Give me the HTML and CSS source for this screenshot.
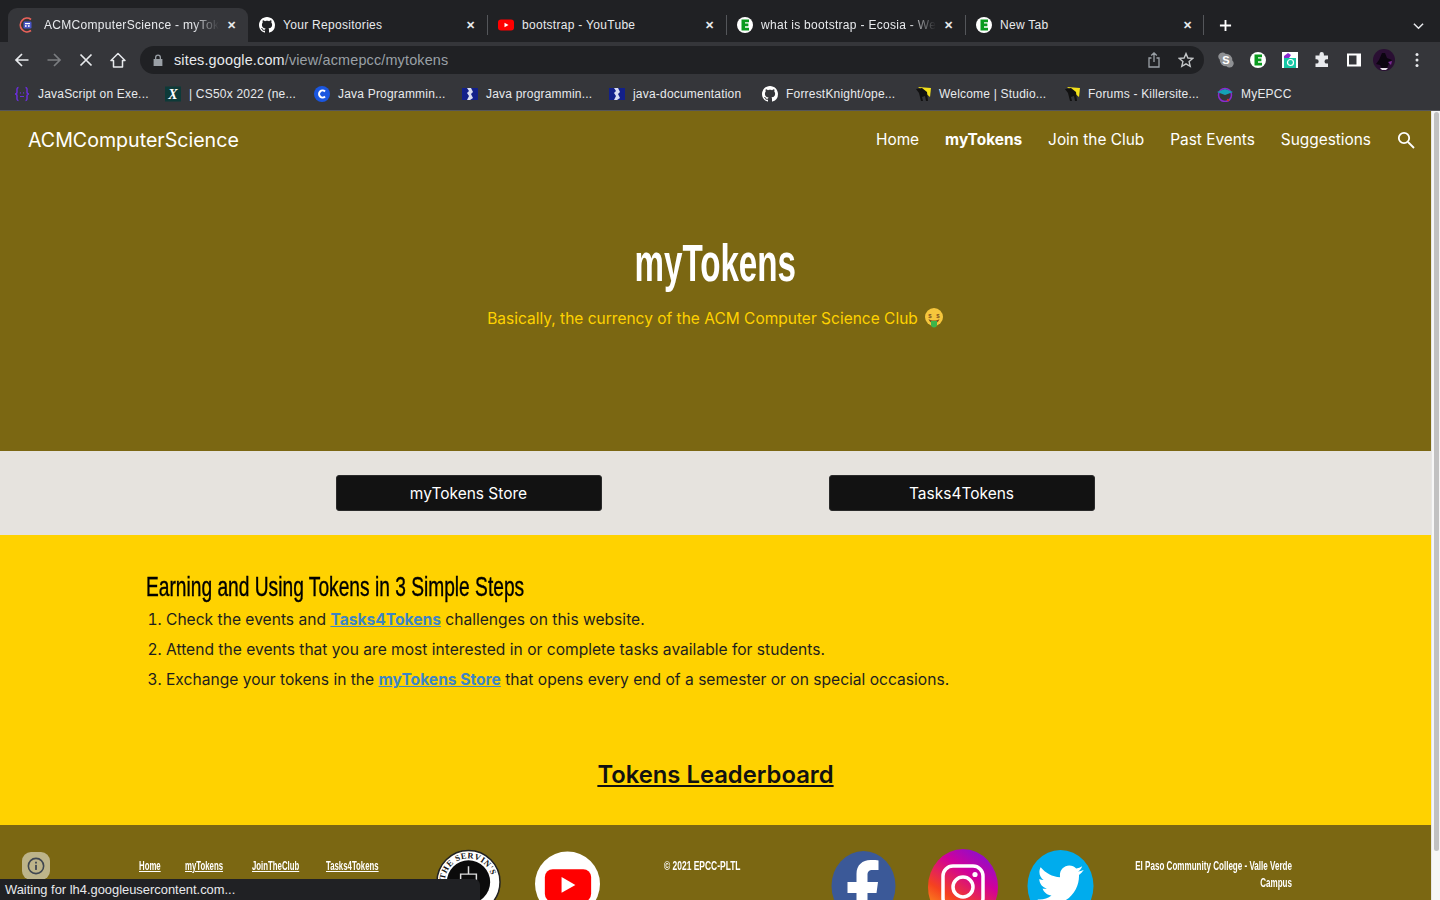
FILE: index.html
```html
<!DOCTYPE html>
<html lang="en">
<head>
<meta charset="utf-8">
<title>ACMComputerScience - myTokens</title>
<link rel="stylesheet" href="styles.css">
</head>
<body>
<div class="browser">
  <div class="tabstrip">
    <div class="tab tab-active">
      <svg class="fav" viewBox="0 0 16 16"><path d="M12 2.4A6.8 6.8 0 1 0 12 13.6" fill="none" stroke="#e8625a" stroke-width="1.8"/><rect x="4.5" y="4.5" width="8" height="7" rx="1.2" fill="#4a56c8"/><rect x="6" y="6" width="5" height="1.2" fill="#fff"/><rect x="6" y="8.2" width="1.6" height="1.6" fill="#fff"/><rect x="9" y="8.2" width="1.6" height="1.6" fill="#fff"/></svg>
      <span class="tab-title fade">ACMComputerScience - myTok</span>
      <span class="tab-x">✕</span>
    </div>
    <div class="tab">
      <svg class="fav" viewBox="0 0 16 16"><path fill="#fff" d="M8 0C3.58 0 0 3.58 0 8c0 3.54 2.29 6.53 5.47 7.59.4.07.55-.17.55-.38 0-.19-.01-.82-.01-1.49-2.01.37-2.53-.49-2.69-.94-.09-.23-.48-.94-.82-1.13-.28-.15-.68-.52-.01-.53.63-.01 1.08.58 1.23.82.72 1.21 1.87.87 2.33.66.07-.52.28-.87.51-1.07-1.78-.2-3.64-.89-3.64-3.95 0-.87.31-1.59.82-2.15-.08-.2-.36-1.02.08-2.12 0 0 .67-.21 2.2.82.64-.18 1.32-.27 2-.27s1.36.09 2 .27c1.53-1.04 2.2-.82 2.2-.82.44 1.1.16 1.92.08 2.12.51.56.82 1.27.82 2.15 0 3.07-1.87 3.75-3.65 3.95.29.25.54.73.54 1.48 0 1.07-.01 1.93-.01 2.2 0 .21.15.46.55.38A8.01 8.01 0 0 0 16 8c0-4.42-3.58-8-8-8z"/></svg>
      <span class="tab-title">Your Repositories</span>
      <span class="tab-x">✕</span>
    </div>
    <div class="tab tab-sep">
      <svg class="fav" viewBox="0 0 16 16"><rect y="2.5" width="16" height="11" rx="3" fill="#f00"/><path d="M6.5 5.7v4.6L10.5 8z" fill="#fff"/></svg>
      <span class="tab-title">bootstrap - YouTube</span>
      <span class="tab-x">✕</span>
    </div>
    <div class="tab tab-sep">
      <svg class="fav" viewBox="0 0 16 16"><circle cx="8" cy="8" r="8" fill="#fff"/><path d="M4.5 2.5h7.5v2.8H8v1.3h3.4v2.6H8v1.5h4v2.8H4.5z" fill="#0a9a1f"/></svg>
      <span class="tab-title fade">what is bootstrap - Ecosia - We</span>
      <span class="tab-x">✕</span>
    </div>
    <div class="tab tab-sep tab-last">
      <svg class="fav" viewBox="0 0 16 16"><circle cx="8" cy="8" r="8" fill="#fff"/><path d="M4.5 2.5h7.5v2.8H8v1.3h3.4v2.6H8v1.5h4v2.8H4.5z" fill="#0a9a1f"/></svg>
      <span class="tab-title">New Tab</span>
      <span class="tab-x">✕</span>
    </div>
    <svg class="newtab" viewBox="0 0 14 14"><path d="M7 1v12M1 7h12" stroke="#fff" stroke-width="2"/></svg>
    <svg class="tabmenu" viewBox="0 0 12 8"><path d="M1 1.5l5 5 5-5" fill="none" stroke="#e8eaed" stroke-width="1.6"/></svg>
  </div>

  <div class="toolbar">
    <svg class="navicon" viewBox="0 0 16 16"><path d="M14.5 8H2M8 2L2 8l6 6" fill="none" stroke="#e8eaed" stroke-width="1.7"/></svg>
    <svg class="navicon" viewBox="0 0 16 16"><path d="M1.5 8H14M8 2l6 6-6 6" fill="none" stroke="#7b7d80" stroke-width="1.7"/></svg>
    <svg class="navicon" viewBox="0 0 16 16"><path d="M2.5 2.5l11 11M13.5 2.5l-11 11" fill="none" stroke="#e8eaed" stroke-width="1.7"/></svg>
    <svg class="navicon" viewBox="0 0 16 16"><path d="M8 1.5L1 8.500h2.500V15h9V8.500H15z" fill="none" stroke="#e8eaed" stroke-width="1.5" stroke-linejoin="round"/></svg>
    <div class="omnibox">
      <svg class="lock" viewBox="0 0 10 12"><path d="M2 5V3.400a3 3 0 0 1 6 0V5h1.400v7H.6V5zm1.300 0h3.400V3.400a1.700 1.700 0 0 0-3.400 0z" fill="#9aa0a6" fill-rule="evenodd"/></svg>
      <span class="url"><span class="url-host">sites.google.com</span>/view/acmepcc/mytokens</span>
      <svg class="omni-ic omni-share" viewBox="0 0 14 16"><path d="M7 1v9M4.200 3.600L7 1l2.800 2.600M4.500 6H2v9h10V6H9.500" fill="none" stroke="#9aa0a6" stroke-width="1.300"/></svg>
      <svg class="omni-ic" viewBox="0 0 16 16"><path d="M8 1.600l1.900 4.400 4.800.4-3.600 3.200 1.100 4.700L8 11.800l-4.200 2.500 1.100-4.700L1.300 6.400 6.100 6z" fill="none" stroke="#c4c7c9" stroke-width="1.400"/></svg>
    </div>
    <div class="ext-row">
      <svg class="ext" viewBox="0 0 16 16"><path d="M4.500 0.500a4 4 0 0 1 3 1.200 6.500 6.500 0 0 1 6.800 6.800A4 4 0 0 1 11.500 15.500a4 4 0 0 1-3-1.200A6.500 6.500 0 0 1 1.700 7.500 4 4 0 0 1 4.500 0.500z" fill="#8f9194"/><text x="8" y="12" class="ext-s">S</text></svg>
      <svg class="ext" viewBox="0 0 16 16"><circle cx="8" cy="8" r="8" fill="#fff"/><path d="M4.500 2.500h7.500v2.800H8v1.300h3.400v2.600H8v1.500h4v2.800H4.500z" fill="#0a9a1f"/></svg>
      <svg class="ext" viewBox="0 0 16 16"><rect width="16" height="16" fill="#fff"/><path d="M2 4l4-3 3 2-2 3H2z" fill="#8a2bd0"/><rect x="2" y="6" width="12" height="10" fill="#16c7a5"/><circle cx="8.500" cy="10.500" r="3" fill="none" stroke="#fff" stroke-width="1.200"/></svg>
      <svg class="ext" viewBox="0 0 16 16"><path d="M5.500 2.200a2.200 2.200 0 0 1 4.400 0V3.500H14v3.700h-1.300a2.200 2.200 0 0 0 0 4.400H14V15H1.500v-3.400h1a2.200 2.200 0 0 0 0-4.400h-1V3.500h4z" fill="#e8eaed"/></svg>
      <svg class="ext" viewBox="0 0 16 16"><path d="M1 1.500h14v13H1zm2 2v9h7.500v-9z" fill="#fff" fill-rule="evenodd"/></svg>
      <svg class="avatar" viewBox="0 0 22 22"><circle cx="11" cy="11" r="11" fill="#2a0f33"/><path d="M9 4h3l2 5 5 2-3 3-1 3-2 3H9l-2-4-4-1 3-4z" fill="#0c0510"/><path d="M7 19h8l-2 2H9z" fill="#e6e0e8"/><path d="M15 13l4-1-1 4z" fill="#7a2a93"/></svg>
      <svg class="dots" viewBox="0 0 4 16"><circle cx="2" cy="2.500" r="1.500" fill="#e8eaed"/><circle cx="2" cy="8" r="1.500" fill="#e8eaed"/><circle cx="2" cy="13.500" r="1.500" fill="#e8eaed"/></svg>
    </div>
  </div>

  <div class="bookmarks">
    <div class="bm bm1"><svg class="fav" viewBox="0 0 16 16"><path d="M4.500 1.500C2.500 1.500 3 4 3 6S1 8 1 8s2 0 2 2-.5 4.500 1.500 4.500M11.500 1.500c2 0 1.500 2.500 1.500 4.500s2 2 2 2-2 0-2 2 .5 4.500-1.500 4.500" fill="none" stroke="#6a2fd8" stroke-width="1.500"/><path d="M6 6.500l.8.8M9.200 6.500l.8.800M6 10.500h4" stroke="#6a2fd8" stroke-width="1.100"/></svg><span>JavaScript on Exe...</span></div>
    <div class="bm bm2"><svg class="fav" viewBox="0 0 16 16"><rect width="16" height="15" y=".5" fill="#0d3a38"/><text x="8" y="13" class="ext-x">X</text></svg><span>| CS50x 2022 (ne...</span></div>
    <div class="bm bm3"><svg class="fav" viewBox="0 0 16 16"><circle cx="8" cy="8" r="8" fill="#1a56e0"/><path d="M11 5.500a3.500 3.500 0 1 0 0 5" fill="none" stroke="#fff" stroke-width="2"/></svg><span>Java Programmin...</span></div>
    <div class="bm bm4"><svg class="fav" viewBox="0 0 16 16"><rect y="2" width="16" height="12" fill="#12208a"/><path d="M5 2h4l2 4-2 2 2 4-3 2H5l2-4-2-3 2-2z" fill="#d8dcf2"/></svg><span>Java programmin...</span></div>
    <div class="bm bm5"><svg class="fav" viewBox="0 0 16 16"><rect y="2" width="16" height="12" fill="#12208a"/><path d="M5 2h4l2 4-2 2 2 4-3 2H5l2-4-2-3 2-2z" fill="#d8dcf2"/></svg><span>java-documentation</span></div>
    <div class="bm bm6"><svg class="fav" viewBox="0 0 16 16"><path fill="#fff" d="M8 0C3.580 0 0 3.580 0 8c0 3.540 2.290 6.530 5.470 7.590.4.070.55-.17.55-.38 0-.19-.01-.82-.01-1.490-2.010.37-2.530-.49-2.690-.94-.09-.23-.48-.94-.82-1.130-.28-.15-.68-.52-.01-.53.630-.01 1.080.58 1.230.82.720 1.210 1.870.87 2.330.66.070-.52.280-.87.510-1.070-1.780-.2-3.640-.89-3.640-3.950 0-.87.310-1.590.820-2.150-.08-.2-.36-1.020.08-2.120 0 0 .67-.21 2.200.82.640-.18 1.320-.27 2-.27s1.360.09 2 .27c1.530-1.040 2.200-.82 2.200-.82.44 1.100.16 1.920.08 2.120.51.56.82 1.270.82 2.150 0 3.070-1.870 3.750-3.650 3.950.29.25.54.73.54 1.480 0 1.070-.01 1.930-.01 2.200 0 .21.15.46.55.38A8.010 8.010 0 0 0 16 8c0-4.420-3.580-8-8-8z"/></svg><span>ForrestKnight/ope...</span></div>
    <div class="bm bm7"><svg class="fav" viewBox="0 0 16 16"><path d="M3 1l13 1-1 9z" fill="#f4e11a"/><path d="M1 3l6-1 5 4 1 9h-2l-1-5-3 1 1 4H6L4 7z" fill="#111"/></svg><span>Welcome | Studio...</span></div>
    <div class="bm bm8"><svg class="fav" viewBox="0 0 16 16"><path d="M3 1l13 1-1 9z" fill="#f4e11a"/><path d="M1 3l6-1 5 4 1 9h-2l-1-5-3 1 1 4H6L4 7z" fill="#111"/></svg><span>Forums - Killersite...</span></div>
    <div class="bm bm9"><svg class="fav" viewBox="0 0 16 16"><circle cx="8" cy="9" r="6.500" fill="none" stroke="#8a2bd0" stroke-width="1.500"/><path d="M0 6l8-3 8 3-8 3z" fill="#14a3b8"/><circle cx="11" cy="14" r="1.200" fill="#c8322c"/></svg><span>MyEPCC</span></div>
  </div>
</div>

<main class="viewport">
  <div class="page">
    <section class="hero">
      <nav class="nav">
        <a class="brand">ACMComputerScience</a>
        <div class="nav-links">
          <a>Home</a>
          <a class="current">myTokens</a>
          <a>Join the Club</a>
          <a>Past Events</a>
          <a>Suggestions</a>
          <svg class="search" viewBox="0 0 18 18"><circle cx="7" cy="7" r="5.200" fill="none" stroke="#fff" stroke-width="1.800"/><path d="M11 11l6 6" stroke="#fff" stroke-width="1.800"/></svg>
        </div>
      </nav>
      <h1><span class="h1-text">myTokens</span></h1>
      <p class="tagline">Basically, the currency of the ACM Computer Science Club <svg class="money" viewBox="0 0 20 20"><circle cx="10" cy="9.500" r="9" fill="#f6c63c"/><text x="6" y="10" class="dollar">$</text><text x="14" y="10" class="dollar">$</text><path d="M4.500 11.500c3 2 8 2 11 0-1 3-3 4-5.500 4s-4.500-1-5.500-4z" fill="#7a4a1e"/><path d="M7 13.500h6v3.500a3 3 0 0 1-6 0z" fill="#3bb54a"/></svg></p>
    </section>

    <section class="button-band">
      <a class="btn">myTokens Store</a>
      <a class="btn">Tasks4Tokens</a>
    </section>

    <section class="steps">
      <h2><span class="h2-text">Earning and Using Tokens in 3 Simple Steps</span></h2>
      <ol>
        <li>Check the events and <a href="#">Tasks4Tokens</a> challenges on this website.</li>
        <li>Attend the events that you are most interested in or complete tasks available for students.</li>
        <li>Exchange your tokens in the <a href="#">myTokens Store</a> that opens every end of a semester or on special occasions.</li>
      </ol>
      <a class="leaderboard" href="#">Tokens Leaderboard</a>
    </section>

    <footer class="footer">
      <div class="foot-links">
        <a class="narrow">Home</a><a class="narrow">myTokens</a><a class="narrow">JoinTheClub</a><a class="narrow">Tasks4Tokens</a>
      </div>
      <div class="foot-logos">
        <svg class="logo-serv" viewBox="0 0 66 66"><circle cx="33" cy="33" r="32" fill="#fff" stroke="#222" stroke-width="1.500"/><circle cx="33" cy="33" r="22" fill="#0b0b0b"/><path id="arc" d="M9 33a24 24 0 0 1 48 0" fill="none"/><text class="serv-text"><textPath href="#arc" startOffset="3%">THE SERVIN'S</textPath></text><path d="M33 17v8M25 25h16v12H25z" fill="none" stroke="#ddd" stroke-width="1.500"/></svg>
        <svg class="logo-yt" viewBox="0 0 66 66"><circle cx="33" cy="33" r="33" fill="#fff"/><rect x="10" y="18" width="47" height="33" rx="8" fill="#f00"/><path d="M27 26v16l14-8z" fill="#fff"/></svg>
      </div>
      <p class="copy"><span class="narrow narrow-copy">© 2021 EPCC-PLTL</span></p>
      <div class="foot-social">
        <svg class="soc soc-fb" viewBox="0 0 64 70"><ellipse cx="32" cy="35" rx="32" ry="35" fill="#3b5998"/><path d="M36 70V42h9l1.500-11H36v-7c0-3 1-5 5.500-5H47V9.500C45.500 9 42.500 9 39 9c-8 0-14 5-14 14v8h-9v11h9v28z" fill="#fff"/></svg>
        <svg class="soc soc-ig" viewBox="0 0 70 76"><defs><linearGradient id="ig" x1="0.150" y1="1" x2="0.750" y2="0"><stop offset="0" stop-color="#ffb21c"/><stop offset=".35" stop-color="#f5421f"/><stop offset=".7" stop-color="#d1009a"/><stop offset="1" stop-color="#8a0fd0"/></linearGradient></defs><ellipse cx="35" cy="38" rx="35" ry="38" fill="url(#ig)"/><rect x="15" y="17" width="40" height="42" rx="10" fill="none" stroke="#fff" stroke-width="3.500"/><circle cx="35" cy="38" r="10" fill="none" stroke="#fff" stroke-width="3.500"/><circle cx="47" cy="25.500" r="2.600" fill="#fff"/></svg>
        <svg class="soc soc-tw" viewBox="0 0 66 72"><ellipse cx="33" cy="36" rx="33" ry="36" fill="#00aced"/><path d="M56 20c-1.700.8-3.500 1.300-5.400 1.500 2-1.200 3.400-3 4.100-5.200-1.800 1.100-3.800 1.900-6 2.300C47 16.700 44.500 15.500 41.800 15.500c-5.200 0-9.400 4.300-9.400 9.600 0 .7.100 1.500.2 2.200-7.800-.4-14.700-4.200-19.400-10-.8 1.400-1.300 3-1.300 4.800 0 3.300 1.700 6.300 4.200 8-1.500 0-3-.5-4.300-1.200v.1c0 4.700 3.300 8.600 7.600 9.500-.8.200-1.600.3-2.500.3-.6 0-1.200-.1-1.800-.2 1.200 3.900 4.700 6.700 8.900 6.800-3.300 2.600-7.400 4.100-11.900 4.100-.8 0-1.500 0-2.300-.1 4.200 2.800 9.200 4.400 14.600 4.400 17.500 0 27.100-14.800 27.100-27.600v-1.300c1.800-1.300 3.400-3 4.700-4.900z" fill="#fff"/></svg>
      </div>
      <div class="campus"><p class="campus-text">El Paso Community College - Valle Verde<br>Campus</p></div>
    </footer>
  </div>
  <div class="scrollbar"><div class="thumb"></div></div>
</main>

<div class="info-bubble"><svg viewBox="0 0 16 16"><circle cx="8" cy="8" r="6.800" fill="none" stroke="#3f4650" stroke-width="1.400"/><rect x="7.200" y="7" width="1.600" height="4.500" fill="#3f4650"/><rect x="7.200" y="4.200" width="1.600" height="1.600" fill="#3f4650"/></svg></div>
<div class="status">Waiting for lh4.googleusercontent.com...</div>
</body>
</html>
```
FILE: styles.css
```css
* { box-sizing: border-box; }
html, body { margin: 0; height: 900px; overflow: hidden; }
body { background: #fff; font-family: "Inter", "Liberation Sans", sans-serif; position: relative; display: flex; flex-direction: column; }

/* Browser chrome */
.browser { flex: 0 0 111px; background: #35363a; border-bottom: 1px solid #55565a; font-family: "Liberation Sans", Arial, sans-serif; color: #e8eaed; display: flex; flex-direction: column; }
.tabstrip { height: 42px; background: #202124; display: flex; padding: 8px 0 0 8px; position: relative; }
.tab { width: 239px; height: 34px; display: flex; align-items: center; padding: 0 9px 0 11px; position: relative; font-size: 12px; }
.tab-active { width: 240px; background: #35363a; border-radius: 9px 9px 0 0; }
.tab-sep::before { content: ""; position: absolute; left: 0; top: 7px; width: 1px; height: 20px; background: #54565a; }
.tab-last::after { content: ""; position: absolute; right: 0; top: 7px; width: 1px; height: 20px; background: #54565a; }
.fav { width: 16px; height: 16px; flex: none; }
.tab-title { flex: 1; margin: 0 8px; white-space: nowrap; overflow: hidden; letter-spacing: .3px; }
.tab-active .tab-title { margin-left: 9px; }
.fade { -webkit-mask-image: linear-gradient(90deg, #000 85%, transparent 100%); mask-image: linear-gradient(90deg, #000 85%, transparent 100%); }
.tab-x { font-size: 11px; width: 12px; color: #e8eaed; font-weight: 700; }
.newtab { width: 13px; height: 13px; margin: 11px 0 0 15px; }
.tabmenu { width: 11px; height: 8px; margin: 14px 0 0 181px; }

.toolbar { height: 36px; display: flex; align-items: center; padding: 0 14px; }
.navicon { width: 16px; height: 16px; margin-right: 16px; flex: none; }
.omnibox { width: 1064px; height: 28px; margin-left: -2px; background: #202124; border-radius: 14px; display: flex; align-items: center; padding: 0 10px 0 13px; font-size: 14.4px; }
.lock { width: 10px; height: 12px; }
.url { margin-left: 11px; flex: 1; color: #9aa0a6; letter-spacing: .17px; }
.url-host { color: #e8eaed; }
.omni-ic { width: 16px; height: 16px; }
.omni-share { width: 14px; margin-right: 17px; }
.ext-row { display: flex; align-items: center; margin-left: 14px; }
.ext { width: 16px; height: 16px; margin-right: 16px; }
.ext-s { font: 700 11px "Liberation Sans", sans-serif; fill: #fff; text-anchor: middle; }
.ext-x { font: italic 700 14px "Liberation Serif", serif; fill: #fff; text-anchor: middle; }
.avatar { width: 22px; height: 22px; margin-left: -5px; }
.dots { width: 4px; height: 16px; margin-left: 20px; }

.bookmarks { height: 32px; display: flex; align-items: center; padding-left: 14px; font-size: 12px; letter-spacing: .2px; }
.bm { display: flex; align-items: center; gap: 8px; white-space: nowrap; }
.bm1 { width: 151px; }
.bm2 { width: 149px; }
.bm3 { width: 148px; }
.bm4 { width: 147px; }
.bm5 { width: 153px; }
.bm6 { width: 153px; }
.bm7 { width: 149px; }
.bm8 { width: 153px; }

/* Page viewport */
.viewport { flex: 1; display: flex; min-height: 0; overflow: hidden; }
.page { flex: 1; min-width: 0; display: flex; flex-direction: column; font-family: "Inter", "Liberation Sans", sans-serif; }
.scrollbar { flex: 0 0 9px; background: #f6f6f6; border-left: 1px solid #e6e6e6; padding: 1px 1px 0 2px; }
.thumb { height: 739px; background: #c1c1c1; border-radius: 4px; }

.hero { height: 340px; background: #7b6712; display: flex; flex-direction: column; align-items: center; color: #fff; }
.nav { width: 100%; height: 57px; padding: 0 16px 0 28px; display: flex; align-items: center; justify-content: space-between; font-size: 15.4px; }
.brand { font-size: 19.6px; }
.nav-links { display: flex; align-items: center; gap: 26px; }
.nav-links a.current { font-weight: 700; }
.search { width: 18px; height: 18px; }
h1 { margin: 66px 0 0; font: 700 51px/60px "Liberation Sans", sans-serif; color: #fff; }
.h1-text { display: inline-block; transform: scaleX(.65); }
.tagline { margin: 14px 0 0; font-size: 15.5px; line-height: 22px; color: #ffd200; display: flex; align-items: center; gap: 6px; }
.money { width: 20px; height: 21px; margin-top: -3px; }
.dollar { font: 700 6px "Liberation Sans", sans-serif; fill: #7a4a1e; text-anchor: middle; }

.button-band { height: 84px; background: #e6e3de; display: grid; grid-template-columns: 266px 266px; column-gap: 227px; justify-content: center; align-items: center; padding-right: 1px; }
.btn { height: 36px; background: #121212; border: 1px solid #2a2a2a; border-radius: 3px; color: #fff; font-size: 15.5px; display: flex; align-items: center; justify-content: center; }

.steps { height: 290px; background: #ffd200; padding: 34px 0 0 146px; color: #1e1e1e; position: relative; }
h2 { margin: 0; font: 400 28px/36px "Liberation Sans", sans-serif; color: #000; -webkit-text-stroke: .4px #000; white-space: nowrap; }
.h2-text { display: inline-block; transform: scaleX(.685); transform-origin: left center; }
ol { margin: 0; padding: 0 0 0 20px; font-size: 15.6px; line-height: 30px; }
li a { color: #3d85c6; font-weight: 700; }
.leaderboard { position: absolute; left: 0; right: 0; top: 225px; text-align: center; font-size: 23.8px; font-weight: 600; color: #111; }

.footer { flex: 1; min-height: 75px; background: #7b6712; display: flex; align-items: flex-start; color: #fff; font-family: "Liberation Sans", sans-serif; font-size: 13px; line-height: 17px; font-weight: 700; }
.narrow { display: inline-block; transform: scaleX(.6); transform-origin: left center; white-space: nowrap; }
.narrow-copy { transform: scaleX(.65); }
.foot-links { width: 297px; margin: 32px 0 0 139px; display: grid; grid-template-columns: 46px 67px 74px 1fr; }
.foot-links .narrow { text-decoration: underline; }
.foot-logos { display: flex; gap: 34px; margin-top: 24px; }
.logo-serv { width: 65px; height: 66px; }
.logo-yt { width: 65px; height: 66px; margin-top: 2px; }
.serv-text { font: 700 8.5px "Liberation Serif", serif; letter-spacing: .6px; fill: #111; }
.copy { width: 167px; margin: 32px 0 0 64px; }
.foot-social { display: flex; align-items: flex-start; margin: 24px 0 0 0; }
.soc { flex: none; }
.soc-fb { width: 65px; height: 70px; margin: 2px 32px 0 0; }
.soc-ig { width: 70px; height: 76px; margin-right: 29px; }
.soc-tw { width: 67px; height: 72px; margin-top: 1px; }
.campus { width: 157px; margin: 32px 0 0 41px; }
.campus-text { width: 262px; margin: 0 0 0 -105px; text-align: right; transform: scaleX(.62); transform-origin: right center; }

/* Overlays */
.info-bubble { position: absolute; left: 22px; top: 852px; width: 28px; height: 28px; border-radius: 9px; background: #bdb48a; display: flex; align-items: center; justify-content: center; }
.info-bubble svg { width: 18px; height: 18px; }
.status { position: absolute; left: 0; bottom: 0; width: 480px; height: 21px; background: #202124; border-radius: 0 6px 0 0; color: #e8eaed; font: 12.9px/21px "Liberation Sans", sans-serif; padding-left: 5px; }
```
